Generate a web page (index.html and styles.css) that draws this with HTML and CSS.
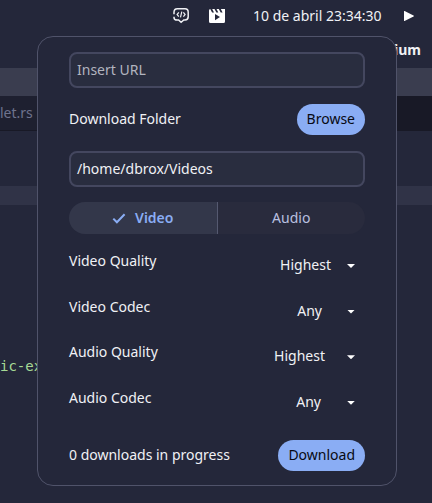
FILE: index.html
```html
<!DOCTYPE html>
<html lang="pt-BR">
<head>
<meta charset="utf-8">
<title>Video downloader applet</title>
<link rel="stylesheet" href="styles.css">
</head>
<body>
<header class="panel">
  <svg class="code-icon" width="18" height="18" viewBox="0 0 18 18" fill="none" stroke="currentColor" stroke-width="1.5">
    <path d="M2 7.2V5.3Q2 1.8 5.4 1.8H13Q16.2 1.8 16.2 5.2V9.8Q16.2 13 13 13H11.8L9.1 15.3L6.6 13H5.2Q2 13 2 10.4V9.7"/>
    <path d="M6.8 5.4 5.1 7.5 6.8 9.6M9.8 4.6 8.5 10.4M11.4 5.4 13.1 7.5 11.4 9.6" stroke-width="1.2"/>
  </svg>
  <svg class="movie-icon" width="16" height="14" viewBox="0 0 16 14">
    <path fill="currentColor" d="M0 1.5Q0 .2 1.2 0L3.1 3.5H5L3.2 0H5.5L7.4 3.5H9.3L7.5 0H9.8L11.7 3.5H13.6L11.8 0H16V12.5Q16 14 14.5 14H1.5Q0 14 0 12.5Z"/>
    <path class="cutout" d="M6 5v6.2l5-3.1z"/>
  </svg>
  <time class="clock">10 de abril 23:34:30</time>
  <svg class="play-icon" width="10" height="10" viewBox="0 0 10 10"><path fill="currentColor" d="M0 .2Q0-.3.6 0L9.5 4.5Q10.3 5 9.5 5.5L.6 10Q0 10.3 0 9.8Z"/></svg>
  <svg class="sound-icon" width="7" height="12" viewBox="0 0 7 12"><path fill="currentColor" d="M0 3.5Q0 3 .6 3H3L6 0H7V12H6L3 9H.6Q0 9 0 8.5Z"/></svg>
</header>
<div class="window-title">ium</div>
<div class="menu-band"></div>
<div class="tabs"><div class="tab">let.rs</div><div class="tab-rest"></div></div>
<main class="editor">
  <div class="current-line"></div>
  <code class="source">ic-ex</code>
</main>
<section class="popup">
  <div class="field placeholder">Insert URL</div>
  <div class="row folder"><span>Download Folder</span><button class="button">Browse</button></div>
  <div class="field path">/home/dbrox/Videos</div>
  <div class="segments">
    <div class="segment selected">
      <svg width="14" height="11" viewBox="0 0 14 11" fill="none" stroke="currentColor" stroke-width="2"><path d="M1.3 5.6 4.9 9.3 12.6 1.3"/></svg>
      <span>Video</span>
    </div>
    <div class="segment">Audio</div>
  </div>
  <div class="options">
    <div class="option"><span>Video Quality</span><div class="select"><span>Highest</span><i class="caret"></i></div></div>
    <div class="option"><span>Video Codec</span><div class="select any"><span>Any</span><i class="caret"></i></div></div>
    <div class="option"><span>Audio Quality</span><div class="select wide"><span>Highest</span><i class="caret"></i></div></div>
    <div class="option"><span>Audio Codec</span><div class="select wider"><span>Any</span><i class="caret"></i></div></div>
  </div>
  <div class="row"><span>0 downloads in progress</span><button class="button">Download</button></div>
</section>
</body>
</html>
```
FILE: styles.css
```css
* { box-sizing: border-box; }
body {
  margin: 0;
  height: 503px;
  overflow: hidden;
  position: relative;
  background: #24273a;
  color: #f0f1f5;
  font: 14px/20px "Noto Sans", sans-serif;
}
svg { display: block; flex: none; }
.panel { display: flex; align-items: center; height: 32px; padding-left: 172px; }
.movie-icon { margin-left: 19px; color: #fff; }
.cutout { fill: #24273a; }
.clock { width: 128px; margin-left: 28px; white-space: nowrap; }
.play-icon { margin-left: 23px; color: #fff; }
.sound-icon { margin-left: 19px; color: #fff; }
.window-title { height: 36px; padding: 8px 11px 0 0; text-align: right; font-weight: 700; }
.menu-band { height: 28px; background: #3a3d4f; }
.tabs { display: flex; height: 35px; border-bottom: 1px solid #181926; }
.tab { width: 200px; padding-top: 7px; background: #1e2030; color: #6e738d; }
.tab-rest { flex: 1; background: #181926; }
.editor { padding-top: 55px; }
.current-line { height: 19px; background: #303347; }
.source { display: block; margin-top: 151px; color: #a6da95; font: 14px/20px "DejaVu Sans Mono", monospace; }
.popup {
  position: absolute;
  top: 36px;
  left: 37px;
  width: 360px;
  height: 450px;
  padding: 15px 31px;
  background: #24273a;
  border: 1px solid #50536a;
  border-radius: 16px;
}
.field {
  height: 36px;
  padding: 6px;
  border: 2px solid #44475f;
  border-radius: 8px;
  background: #292d3f;
}
.placeholder { color: #b2b4bf; }
.row { display: flex; align-items: center; justify-content: space-between; height: 32px; }
.folder { margin: 15px 0 16px; }
.button {
  height: 31px;
  padding: 0 10px;
  border: 0;
  border-radius: 16px;
  background: #8aadf4;
  color: #080a12;
  font: inherit;
}
.segments { display: flex; height: 32px; margin-top: 15px; border-radius: 16px; overflow: hidden; }
.segment { flex: 1; display: flex; align-items: center; justify-content: center; background: #292b3d; color: #b9c0e0; }
.selected { gap: 9px; background: #33374a; color: #8aadf4; font-weight: 600; border-right: 1px solid #555970; }
.options { padding-top: 17px; height: 205px; }
.option { display: flex; justify-content: space-between; height: 45.6px; }
.select { display: flex; align-items: center; gap: 16px; height: 20px; margin: 4px 10px 0 0; }
.any { gap: 25px; }
.wide { gap: 22px; }
.wider { gap: 26px; }
.caret { width: 8px; height: 4px; margin-top: 2px; background: #fff; clip-path: polygon(0 0, 100% 0, 50% 100%); }
```
